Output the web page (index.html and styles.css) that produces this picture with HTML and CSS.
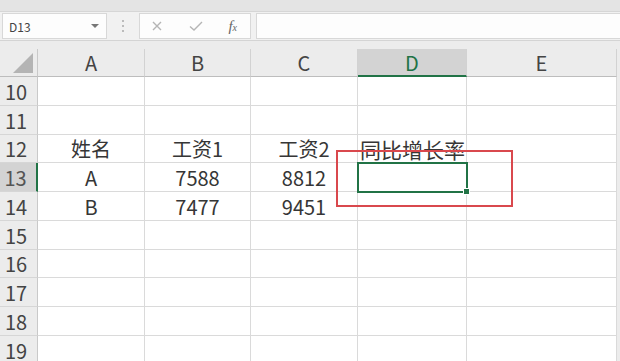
FILE: index.html
```html
<!DOCTYPE html>
<html lang="zh-CN">
<head>
    <meta charset="UTF-8">
    <title>Sheet1</title>
    <link rel="stylesheet" href="styles.css">
</head>
<body>
    <div class="topbar"></div>

    <div class="formula-row">
        <div class="name-box">
            <span>D13</span>
            <span class="caret"></span>
        </div>
        <div class="dots"><i></i><i></i><i></i></div>
        <div class="fx-box">
            <svg width="14" height="14" viewBox="0 0 14 14"><path d="M3 3 L11 11 M11 3 L3 11" stroke="#b5b5b5" stroke-width="1.4" fill="none"/></svg>
            <svg width="16" height="14" viewBox="0 0 16 14"><path d="M2 7.5 L6 11 L14 3" stroke="#b5b5b5" stroke-width="1.4" fill="none"/></svg>
            <span class="fx">f<small>x</small></span>
        </div>
        <div class="formula-input"></div>
    </div>

    <div class="sheet-wrap">
        <div class="sheet">
            <div class="corner"><span class="tri"></span></div>
            <div class="col-head">A</div>
            <div class="col-head">B</div>
            <div class="col-head">C</div>
            <div class="col-head active">D</div>
            <div class="col-head">E</div>
            <div class="edge"></div>

            <div class="row-head">10</div><div class="cell"></div><div class="cell"></div><div class="cell"></div><div class="cell"></div><div class="cell"></div><div class="edge"></div>
            <div class="row-head">11</div><div class="cell"></div><div class="cell"></div><div class="cell"></div><div class="cell"></div><div class="cell"></div><div class="edge"></div>
            <div class="row-head">12</div><div class="cell">姓名</div><div class="cell">工资1</div><div class="cell">工资2</div><div class="cell left">同比增长率</div><div class="cell"></div><div class="edge"></div>
            <div class="row-head active">13</div><div class="cell">A</div><div class="cell">7588</div><div class="cell">8812</div><div class="cell"></div><div class="cell"></div><div class="edge"></div>
            <div class="row-head">14</div><div class="cell">B</div><div class="cell">7477</div><div class="cell">9451</div><div class="cell"></div><div class="cell"></div><div class="edge"></div>
            <div class="row-head">15</div><div class="cell"></div><div class="cell"></div><div class="cell"></div><div class="cell"></div><div class="cell"></div><div class="edge"></div>
            <div class="row-head">16</div><div class="cell"></div><div class="cell"></div><div class="cell"></div><div class="cell"></div><div class="cell"></div><div class="edge"></div>
            <div class="row-head">17</div><div class="cell"></div><div class="cell"></div><div class="cell"></div><div class="cell"></div><div class="cell"></div><div class="edge"></div>
            <div class="row-head">18</div><div class="cell"></div><div class="cell"></div><div class="cell"></div><div class="cell"></div><div class="cell"></div><div class="edge"></div>
            <div class="row-head">19</div><div class="cell"></div><div class="cell"></div><div class="cell"></div><div class="cell"></div><div class="cell"></div><div class="edge"></div>
        </div>

        <div class="selection"><span class="handle"></span></div>
        <div class="mark"></div>
    </div>
</body>
</html>
```

FILE: styles.css
```css
body {
    margin: 0;
    width: 620px;
    height: 361px;
    overflow: hidden;
    background: #ececec;
    font-family: "Noto Sans CJK SC", "Liberation Sans", sans-serif;
    color: #333;
}
.topbar {
    height: 11px;
    background: #e4e4e4;
    border-bottom: 1px solid #d6d6d6;
}
.formula-row {
    display: flex;
    align-items: center;
    height: 28px;
    padding-left: 2px;
    background: #f1f1f1;
    border-bottom: 1px solid #d4d4d4;
}
.name-box, .fx-box, .formula-input {
    height: 26px;
    background: #fdfdfd;
    border: 1px solid #d8d8d8;
    box-sizing: border-box;
}
.name-box {
    width: 105px;
    display: flex;
    align-items: center;
    justify-content: space-between;
    padding: 0 7px 0 6px;
    font-size: 12px;
    color: #444;
}
.caret {
    width: 0;
    height: 0;
    border-left: 4px solid transparent;
    border-right: 4px solid transparent;
    border-top: 4px solid #777;
}
.dots {
    width: 32px;
    display: flex;
    flex-direction: column;
    align-items: center;
    gap: 3px;
}
.dots i {
    width: 2px;
    height: 2px;
    background: #bbb;
}
.fx-box {
    width: 112px;
    display: flex;
    align-items: center;
    justify-content: space-between;
    padding: 0 13px 0 10px;
}
.fx {
    font-family: "Liberation Serif", serif;
    font-style: italic;
    font-size: 15px;
    color: #666;
}
.fx small {
    font-size: 10px;
}
.formula-input {
    flex: 1;
    margin-left: 5px;
    border-right: none;
}
.sheet-wrap {
    position: relative;
    margin-top: 8px;
}
.sheet {
    display: grid;
    grid-template-columns: 38px 107px 106px 107px 109px 150px 3px;
    grid-template-rows: 28px repeat(10, 28.75px);
}
.corner, .col-head, .row-head {
    background: #ececec;
    color: #444;
    font-size: 20px;
    box-sizing: border-box;
}
.corner {
    position: relative;
    border-right: 1px solid #c9c9c9;
    border-bottom: 1px solid #bdbdbd;
}
.tri {
    position: absolute;
    right: 4px;
    bottom: 3px;
    width: 0;
    height: 0;
    border-left: 20px solid transparent;
    border-bottom: 20px solid #b4b4b4;
}
.col-head {
    display: flex;
    align-items: center;
    justify-content: center;
    border-right: 1px solid #d2d2d2;
    border-bottom: 1px solid #bdbdbd;
}
.col-head.active {
    background: #d3d3d3;
    color: #217346;
    border-bottom: 2px solid #217346;
}
.row-head {
    display: flex;
    align-items: center;
    justify-content: center;
    padding-right: 5px;
    padding-top: 1px;
    border-right: 1px solid #c9c9c9;
    border-bottom: 1px solid #d6d6d6;
}
.row-head.active {
    background: #d3d3d3;
    color: #555;
    border-right: 2px solid #217346;
}
.cell {
    display: flex;
    align-items: center;
    justify-content: center;
    padding-top: 1px;
    background: #fff;
    font-size: 20px;
    color: #363636;
    white-space: nowrap;
    border-right: 1px solid #dadada;
    border-bottom: 1px solid #dadada;
    box-sizing: border-box;
}
.cell.left {
    justify-content: flex-start;
    padding-left: 2px;
    font-size: 21px;
}
.edge {
    background: #ececec;
}
.selection {
    position: absolute;
    left: 357px;
    top: 113px;
    width: 111px;
    height: 31px;
    border: 2px solid #217346;
    box-sizing: border-box;
}
.handle {
    position: absolute;
    right: -4px;
    bottom: -4px;
    width: 5px;
    height: 5px;
    background: #217346;
    border: 1px solid #fff;
}
.mark {
    position: absolute;
    left: 336px;
    top: 101px;
    width: 177px;
    height: 57px;
    border: 2px solid #d9484d;
    box-sizing: border-box;
}
```
